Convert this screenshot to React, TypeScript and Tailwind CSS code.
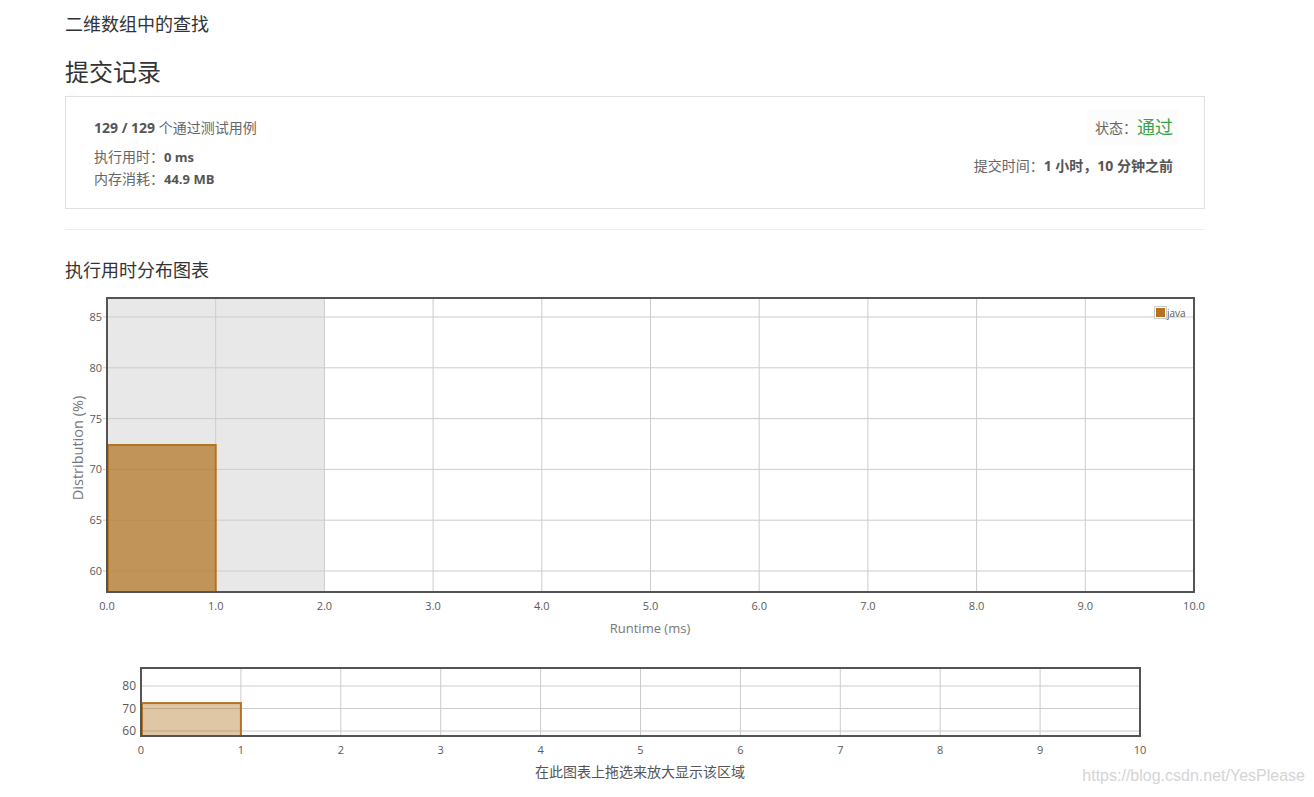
const FONT = { fontFamily: '"Open Sans", "Noto Sans CJK SC", sans-serif' };

// main chart geometry (svg coords, svg placed at page x=65)
const X0 = 42;
const XU = 108.7;
const Y60 = 283;
const YU = 10.16;
const mx = (v: number) => X0 + v * XU;
const my = (v: number) => Y60 - (v - 60) * YU;

// mini chart geometry
const M0 = 76;
const MU = 99.9;
const M60 = 71;
const MYU = 2.25;
const nx = (v: number) => M0 + v * MU;
const ny = (v: number) => M60 - (v - 60) * MYU;

const ticks = [0, 1, 2, 3, 4, 5, 6, 7, 8, 9, 10];

function MainChart() {
  const yTicks = [60, 65, 70, 75, 80, 85];
  return (
    <svg width={1160} height={350} className="block" style={FONT}>
      <rect x={X0} y={10} width={mx(2) - X0} height={294} fill="#e8e8e8" />
      {ticks.slice(1, 10).map((t) => (
        <line key={t} x1={mx(t)} x2={mx(t)} y1={10} y2={304} stroke="#cccccc" strokeWidth={1} />
      ))}
      {yTicks.map((t) => (
        <line key={t} x1={X0 - 4} x2={mx(10)} y1={my(t)} y2={my(t)} stroke="#cccccc" strokeWidth={1} />
      ))}
      <rect
        x={X0 + 1}
        y={my(72.4)}
        width={mx(1) - X0 - 1}
        height={304 - my(72.4)}
        fill="#b0701e"
        fillOpacity={0.7}
        stroke="#b5731e"
        strokeWidth={2}
      />
      <rect x={X0} y={10} width={mx(10) - X0} height={294} fill="none" stroke="#545454" strokeWidth={2} />
      {yTicks.map((t) => (
        <text key={t} x={X0 - 5} y={my(t) + 4} fontSize={11} fill="#5a5a5a" textAnchor="end">
          {t}
        </text>
      ))}
      {ticks.map((t) => (
        <text key={t} x={mx(t)} y={322} fontSize={11} fill="#5a5a5a" textAnchor="middle">
          {t.toFixed(1)}
        </text>
      ))}
      <text x={585} y={345} fontSize={13} fill="#777" textAnchor="middle">
        Runtime (ms)
      </text>
      <text x={18} y={160} fontSize={14.5} fill="#777" textAnchor="middle" transform="rotate(-90 18 160)">
        Distribution (%)
      </text>
      <rect x={1089.5} y={18.5} width={12} height={12} fill="#fff" stroke="#cccccc" strokeWidth={1} />
      <rect x={1091} y={20} width={9} height={9} fill="#b5731e" />
      <text x={1102} y={29} fontSize={10} fill="#5a5a5a">
        java
      </text>
    </svg>
  );
}

function MiniChart() {
  const yTicks = [60, 70, 80];
  return (
    <svg width={1160} height={125} className="block" style={FONT}>
      {ticks.slice(1, 10).map((t) => (
        <line key={t} x1={nx(t)} x2={nx(t)} y1={8} y2={76} stroke="#cccccc" strokeWidth={1} />
      ))}
      {yTicks.map((t) => (
        <line key={t} x1={M0} x2={nx(10)} y1={ny(t)} y2={ny(t)} stroke="#cccccc" strokeWidth={1} />
      ))}
      <rect
        x={M0 + 1}
        y={ny(72.4)}
        width={nx(1) - M0 - 1}
        height={76 - ny(72.4)}
        fill="#b0701e"
        fillOpacity={0.4}
        stroke="#b5731e"
        strokeWidth={2}
      />
      <rect x={M0} y={8} width={nx(10) - M0} height={68} fill="none" stroke="#545454" strokeWidth={2} />
      {yTicks.map((t) => (
        <text key={t} x={M0 - 5} y={ny(t) + 4} fontSize={12} fill="#5a5a5a" textAnchor="end">
          {t}
        </text>
      ))}
      {ticks.map((t) => (
        <text key={t} x={nx(t)} y={94} fontSize={11} fill="#5a5a5a" textAnchor="middle">
          {t}
        </text>
      ))}
      <text x={575} y={117} fontSize={14} fill="#555" textAnchor="middle">
        在此图表上拖选来放大显示该区域
      </text>
    </svg>
  );
}

export default function App() {
  return (
    <div className="relative w-[1314px] h-[797px] bg-white overflow-hidden text-[#333]" style={FONT}>
      <div className="pl-[65px] pt-[12px] w-[1205px]">
        <h1 className="text-[18px] leading-[25px] text-[#333]">二维数组中的查找</h1>
        <h2 className="mt-[20px] text-[24px] leading-[30px] text-[#333]">提交记录</h2>

        <div className="mt-[9px] h-[113px] border border-[#e0e0e0] flex justify-between pl-[28px] pr-[31px]">
          <div className="pt-[20px] text-[14px] text-[#666]">
            <div className="leading-[22px]">
              <b className="text-[#555] text-[14px]">129 / 129</b> 个通过测试用例
            </div>
            <div className="mt-[7px] leading-[21px]">
              执行用时：<b className="text-[#555] text-[13px]">0 ms</b>
            </div>
            <div className="leading-[21px]">
              内存消耗：<b className="text-[#555] text-[13px]">44.9 MB</b>
            </div>
          </div>
          <div className="flex flex-col items-end pt-[12px]">
            <div className="bg-[#fcfcfc] pl-[8px] pr-[6px] h-[36px] flex items-center text-[14px] text-[#666] mr-[-6px]">
              状态：<span className="text-[18px] text-[#3aa34a]">通过</span>
            </div>
            <div className="mt-[10px] text-[14px] text-[#666] leading-[22px]">
              提交时间：<b className="text-[#555] text-[14px]">1 小时，10 分钟之前</b>
            </div>
          </div>
        </div>

        <div className="mt-[20px] border-t border-[#eeeeee]" />

        <h3 className="mt-[28px] text-[18px] leading-[25px] text-[#333]">执行用时分布图表</h3>
      </div>

      <div className="ml-[65px] mt-[5px]">
        <MainChart />
      </div>
      <div className="ml-[65px] mt-[22px]">
        <MiniChart />
      </div>

      <div
        className="absolute right-[9px] bottom-[9px] text-[16px] text-[#d4d4d4]"
        style={{ fontFamily: '"Liberation Sans", Arial, sans-serif' }}
      >
        https://blog.csdn.net/YesPlease
      </div>
    </div>
  );
}
